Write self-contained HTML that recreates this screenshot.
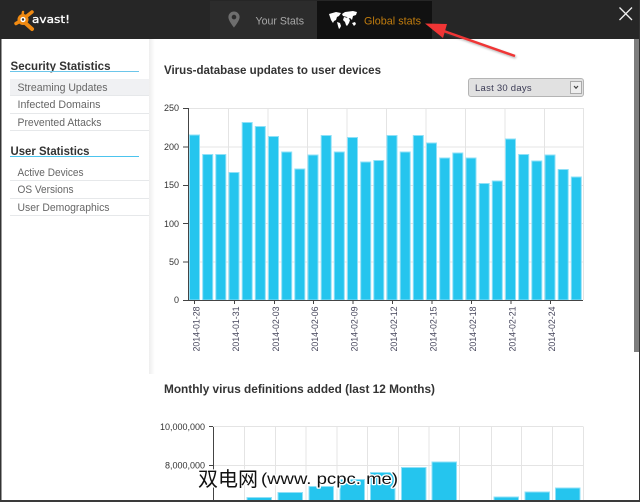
<!DOCTYPE html>
<html>
<head>
<meta charset="utf-8">
<style>
html,body{margin:0;padding:0;background:#fff}
body{width:640px;height:502px;overflow:hidden;position:relative;font-family:"Liberation Sans",sans-serif}
svg{position:absolute;left:0;top:0}
</style>
</head>
<body>
<svg width="640" height="502" viewBox="0 0 640 502" xmlns="http://www.w3.org/2000/svg">
<defs>
<linearGradient id="side" x1="0" x2="1" y1="0" y2="0"><stop offset="0" stop-color="#eee"/><stop offset="1" stop-color="#fff"/></linearGradient>
<filter id="sh" x="-20%" y="-50%" width="140%" height="200%"><feGaussianBlur stdDeviation="1"/></filter>
</defs>
<rect width="640" height="502" fill="#fff"/>
<!-- header -->
<rect width="640" height="39" fill="#262626"/>
<rect x="210" y="1" width="107" height="38" fill="#2c2c2c"/>
<rect x="317" y="1" width="115" height="38" fill="#111"/>
<!-- logo -->
<g stroke="#f08a12" stroke-linecap="round" fill="none">
<path d="M22 20 L16 23.500" stroke-width="3.500"/>
<path d="M22 19 L23 12" stroke-width="2.500"/>
<path d="M23 19 L32 12" stroke-width="3.500"/>
<path d="M23 21 L32 29" stroke-width="4"/>
</g>
<circle cx="23" cy="19.500" r="5.500" fill="#f08a12"/>
<circle cx="23" cy="19.500" r="2.600" fill="#fff"/>
<circle cx="23" cy="19.500" r="1.200" fill="#333"/>
<text x="32" y="23" font-family="'DejaVu Sans',sans-serif" font-size="11" fill="#fff" stroke="#fff" stroke-width=".3" textLength="38" lengthAdjust="spacingAndGlyphs">avast!</text>
<!-- pin -->
<path d="M234 11.500a5.600 5.600 0 0 0-5.600 5.600c0 3.800 5.600 10.400 5.600 10.400s5.600-6.600 5.600-10.400a5.600 5.600 0 0 0-5.600-5.600zm0 3.300a2.300 2.300 0 1 1 0 4.600 2.300 2.300 0 0 1 0-4.600z" fill="#6e6e6e"/>
<text x="255.500" y="24.500" font-size="11" fill="#a8a8a8" textLength="48.500" lengthAdjust="spacingAndGlyphs">Your Stats</text>
<!-- world -->
<g fill="#fff">
<path d="M329 14l7-2 5 1-2 3-2 1-1 3-2 1-1 2-2-3-1-3z"/>
<path d="M337 22l3 1 1 3-1 2-1 1-1-3z"/>
<path d="M342 14l3-2 8-1 4 1-1 3-3 1-1 4-2-2-2 1-1-2-4-1z"/>
<path d="M344 17l4 1 2 2-1 3-2 3-1-1-1-3-2-2z"/>
<path d="M352 23l3-1 1 2-2 2z"/>
</g>
<text x="364" y="24.500" font-size="11" fill="#c07c0e" textLength="57" lengthAdjust="spacingAndGlyphs">Global stats</text>
<!-- close -->
<path d="M619.500 7.500L632 20M632 7.500L619.500 20" stroke="#f0f0f0" stroke-width="1.300"/>
<!-- window edges -->
<rect x="0" y="39" width="1.500" height="463" fill="#333"/>
<rect x="639" y="0" width="1" height="502" fill="#333"/>
<!-- scrollbar -->
<rect x="634" y="39" width="5" height="313" fill="#7d7d7d"/>
<!-- sidebar shadow -->
<rect x="149" y="39" width="6" height="335" fill="url(#side)"/>
<!-- sidebar -->
<text x="10.500" y="70" font-size="12" font-weight="bold" fill="#333" textLength="100" lengthAdjust="spacingAndGlyphs">Security Statistics</text>
<rect x="10" y="71" width="129" height="1" fill="#6cc6ea"/>
<rect x="10" y="79" width="139" height="16" fill="#f0f1f3"/>
<rect x="10" y="95" width="139" height="1" fill="#e6e8ea"/>
<rect x="10" y="113" width="139" height="1" fill="#e6e8ea"/>
<rect x="10" y="130" width="139" height="1" fill="#e6e8ea"/>
<g font-size="11" fill="#666">
<text x="17.500" y="91" textLength="90" lengthAdjust="spacingAndGlyphs">Streaming Updates</text>
<text x="17.500" y="108" textLength="83" lengthAdjust="spacingAndGlyphs">Infected Domains</text>
<text x="17.500" y="126" textLength="84" lengthAdjust="spacingAndGlyphs">Prevented Attacks</text>
<text x="17.500" y="176" textLength="66" lengthAdjust="spacingAndGlyphs">Active Devices</text>
<text x="17.500" y="193" textLength="56" lengthAdjust="spacingAndGlyphs">OS Versions</text>
<text x="17.500" y="211" textLength="92" lengthAdjust="spacingAndGlyphs">User Demographics</text>
</g>
<text x="10.500" y="155" font-size="12" font-weight="bold" fill="#333" textLength="79" lengthAdjust="spacingAndGlyphs">User Statistics</text>
<rect x="10" y="156" width="129" height="1" fill="#4cc4ee"/>
<rect x="10" y="180" width="139" height="1" fill="#e6e8ea"/>
<rect x="10" y="198" width="139" height="1" fill="#e6e8ea"/>
<rect x="10" y="215" width="139" height="1" fill="#e6e8ea"/>
<text x="164" y="74" font-size="12" font-weight="bold" fill="#333" textLength="217" lengthAdjust="spacingAndGlyphs">Virus-database updates to user devices</text>
<text x="164" y="393" font-size="12" font-weight="bold" fill="#333" textLength="271" lengthAdjust="spacingAndGlyphs">Monthly virus definitions added (last 12 Months)</text>
<!-- select -->
<rect x="468.500" y="78.500" width="115" height="18" rx="2.500" fill="#e1e1e1" stroke="#b4b4b4"/>
<text x="475" y="91" font-size="9.500" fill="#3b3b55" letter-spacing=".25">Last 30 days</text>
<rect x="570.500" y="81.500" width="11" height="12" fill="#eee" stroke="#aaa"/>
<path d="M574 86l2 2.200 2-2.200" fill="none" stroke="#444" stroke-width="1.200"/>
<!-- chart 1 grid -->
<g stroke="#e4e4e4" fill="none">
<path d="M188 108.500H583.500M188 147H583.500M188 185.500H583.500M188 223.500H583.500M188 262H583.500"/>
<path d="M228.500 108V300M268 108V300M307.500 108V300M347 108V300M386.500 108V300M426 108V300M465.500 108V300M505 108V300M544.500 108V300M583.500 108V300"/>
</g>
<!-- bars 1 -->
<g fill="#25c5ee" stroke="#8fe0f7" stroke-width="1">
<rect x="189.500" y="135" width="10" height="165"/>
<rect x="202.700" y="154.500" width="10" height="145.500"/>
<rect x="215.800" y="154.500" width="10" height="145.500"/>
<rect x="229" y="172.500" width="10" height="127.500"/>
<rect x="242.200" y="122.500" width="10" height="177.500"/>
<rect x="255.300" y="126.500" width="10" height="173.500"/>
<rect x="268.500" y="136.500" width="10" height="163.500"/>
<rect x="281.700" y="152" width="10" height="148"/>
<rect x="294.800" y="169" width="10" height="131"/>
<rect x="308" y="155" width="10" height="145"/>
<rect x="321.200" y="135.500" width="10" height="164.500"/>
<rect x="334.300" y="152" width="10" height="148"/>
<rect x="347.500" y="137.500" width="10" height="162.500"/>
<rect x="360.700" y="162" width="10" height="138"/>
<rect x="373.800" y="160.500" width="10" height="139.500"/>
<rect x="387" y="135.500" width="10" height="164.500"/>
<rect x="400.200" y="152" width="10" height="148"/>
<rect x="413.300" y="135.500" width="10" height="164.500"/>
<rect x="426.500" y="143" width="10" height="157"/>
<rect x="439.700" y="158" width="10" height="142"/>
<rect x="452.800" y="153" width="10" height="147"/>
<rect x="466" y="158" width="10" height="142"/>
<rect x="479.200" y="183.500" width="10" height="116.500"/>
<rect x="492.300" y="181" width="10" height="119"/>
<rect x="505.500" y="139" width="10" height="161"/>
<rect x="518.700" y="154.500" width="10" height="145.500"/>
<rect x="531.800" y="161" width="10" height="139"/>
<rect x="545" y="155" width="10" height="145"/>
<rect x="558.200" y="169.500" width="10" height="130.500"/>
<rect x="571.300" y="177" width="10" height="123"/>
</g>
<!-- axes 1 -->
<g stroke="#444" fill="none">
<path d="M188.500 108V300.500"/>
<path d="M183 108.500H188M183 147H188M183 185.500H188M183 223.500H188M183 262H188M183 300.500H583"/>
<path d="M194.500 301V304M234.500 301V304M274.500 301V304M313.500 301V304M353 301V304M392.500 301V304M432 301V304M471.500 301V304M511 301V304M550.500 301V304"/>
</g>
<g font-size="9" fill="#333" text-anchor="end">
<text x="179" y="111">250</text><text x="179" y="150">200</text><text x="179" y="188">150</text><text x="179" y="227">100</text><text x="179" y="265">50</text><text x="179" y="303">0</text>
</g>
<g font-size="9" fill="#44445a">
<text transform="translate(199.500 351.500) rotate(-90)" textLength="45" lengthAdjust="spacingAndGlyphs">2014-01-28</text>
<text transform="translate(239 351.500) rotate(-90)" textLength="45" lengthAdjust="spacingAndGlyphs">2014-01-31</text>
<text transform="translate(279 351.500) rotate(-90)" textLength="45" lengthAdjust="spacingAndGlyphs">2014-02-03</text>
<text transform="translate(318 351.500) rotate(-90)" textLength="45" lengthAdjust="spacingAndGlyphs">2014-02-06</text>
<text transform="translate(357.500 351.500) rotate(-90)" textLength="45" lengthAdjust="spacingAndGlyphs">2014-02-09</text>
<text transform="translate(397 351.500) rotate(-90)" textLength="45" lengthAdjust="spacingAndGlyphs">2014-02-12</text>
<text transform="translate(436.500 351.500) rotate(-90)" textLength="45" lengthAdjust="spacingAndGlyphs">2014-02-15</text>
<text transform="translate(476 351.500) rotate(-90)" textLength="45" lengthAdjust="spacingAndGlyphs">2014-02-18</text>
<text transform="translate(515.500 351.500) rotate(-90)" textLength="45" lengthAdjust="spacingAndGlyphs">2014-02-21</text>
<text transform="translate(555 351.500) rotate(-90)" textLength="45" lengthAdjust="spacingAndGlyphs">2014-02-24</text>
</g>
<!-- chart 2 -->
<g stroke="#e4e4e4" fill="none">
<path d="M209 426.500H583.500M209 465.500H583.500"/>
<path d="M244.500 427V500M275.500 427V500M306 427V500M337 427V500M367.500 427V500M398.500 427V500M429 427V500M459.500 427V500M491.500 427V500M521.500 427V500M552.500 427V500M583.500 427V500"/>
</g>
<g fill="#25c5ee" stroke="#8fe0f7" stroke-width="1">
<rect x="247" y="497.500" width="24.500" height="4"/>
<rect x="278" y="492.500" width="24.500" height="9"/>
<rect x="309" y="486.500" width="24.500" height="15"/>
<rect x="340" y="479.500" width="24.500" height="22"/>
<rect x="370.500" y="472.500" width="24.500" height="29"/>
<rect x="401.500" y="467.500" width="24.500" height="34"/>
<rect x="432" y="462" width="24.500" height="39"/>
<rect x="494" y="497" width="24.500" height="5"/>
<rect x="525" y="492" width="24.500" height="10"/>
<rect x="555.500" y="488" width="24.500" height="14"/>
</g>
<path d="M213.500 427V500M209 426.500H213M209 465.500H213" stroke="#444" fill="none"/>
<g font-size="9" fill="#333" text-anchor="end">
<text x="205" y="430">10,000,000</text><text x="205" y="468.500">8,000,000</text>
</g>
<rect x="0" y="500" width="640" height="2" fill="#3a3a3a"/>
<!-- arrow -->
<g filter="url(#sh)" opacity=".45" transform="translate(1 1.500)">
<path d="M515 56L438 29" stroke="#555" stroke-width="2.500"/>
</g>
<path d="M515 56L438 29" stroke="#f03535" stroke-width="2.500"/>
<path d="M425 23.500L447 24L443 38Z" fill="#f03535"/>
<!-- watermark -->
<text x="198" y="486" font-family="'Noto Sans CJK SC',sans-serif" font-size="20" fill="#111" stroke="#fff" stroke-width="2.500" paint-order="stroke" stroke-linejoin="round">双电网</text>
<text x="261" y="484" font-size="16" fill="#111" stroke="#fff" stroke-width="2.500" paint-order="stroke" stroke-linejoin="round" textLength="137" lengthAdjust="spacingAndGlyphs">(www. pcpc. me)</text>
</svg>
</body>
</html>
